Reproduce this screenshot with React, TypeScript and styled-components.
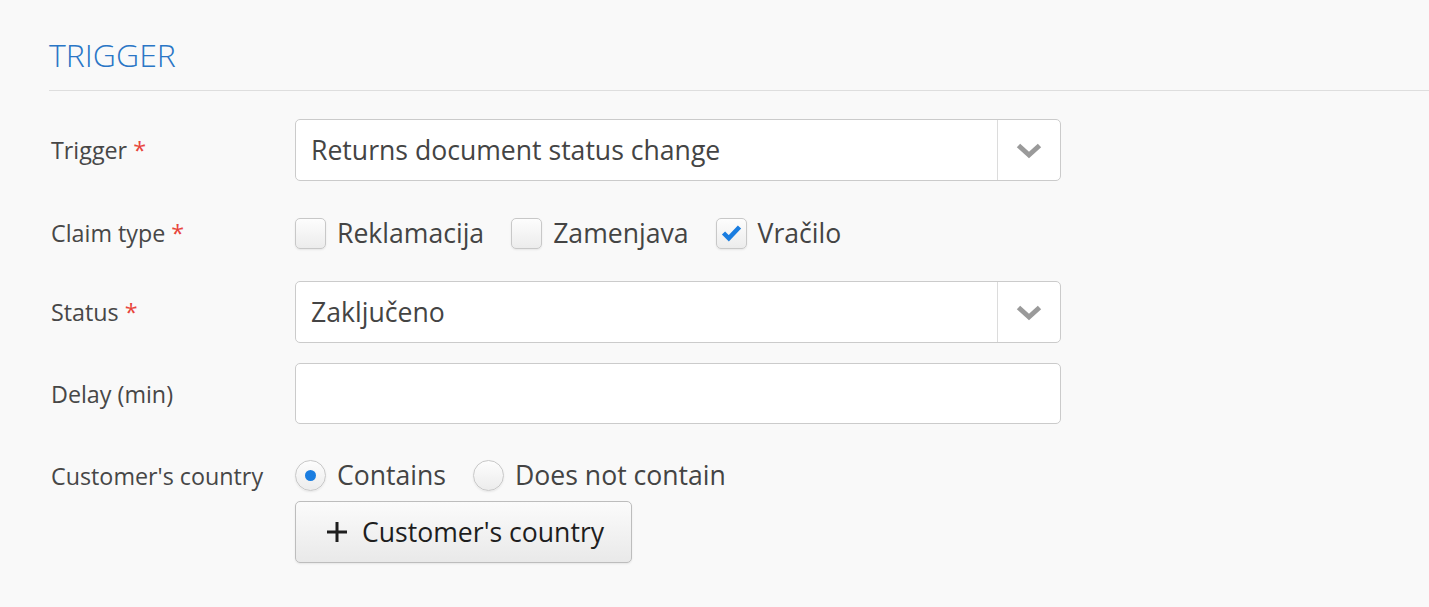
import styled, {createGlobalStyle} from "styled-components";

const GlobalStyle = createGlobalStyle`
    html, body {
        margin: 0;
        padding: 0;
        background: #f9f9f9;
        font-family: "Open Sans", "DejaVu Sans", sans-serif;
    }
    * {
        box-sizing: border-box;
    }
`

const ChevronIcon = () => (
    <svg width="28" height="17" viewBox="0 0 28 17">
        <polyline points="3.5,3.5 14,13 24.5,3.5" fill="none" stroke="#9a9a9a" strokeWidth="5"
                  strokeLinejoin="miter" strokeLinecap="butt"/>
    </svg>
);

const CheckIcon = () => (
    <svg width="21" height="18" viewBox="0 0 21 18">
        <polyline points="2.5,9 7.8,14.3 18.5,3" fill="none" stroke="#1a7de0" strokeWidth="4.5"
                  strokeLinejoin="miter" strokeLinecap="butt"/>
    </svg>
);

const PlusIcon = () => (
    <svg width="22" height="22" viewBox="0 0 22 22">
        <path d="M11 1v20M1 11h20" stroke="#1e1e1e" strokeWidth="3"/>
    </svg>
);

type SelectProps = { value: string };

const Select = ({value}: SelectProps) => (
    <SelectBox>
        <SelectValue>{value}</SelectValue>
        <SelectArrow>
            <ChevronIcon/>
        </SelectArrow>
    </SelectBox>
);

type CheckProps = { label: string; checked?: boolean };

const Check = ({label, checked}: CheckProps) => (
    <Option>
        <CheckBox>{checked && <CheckIcon/>}</CheckBox>
        <OptionText>{label}</OptionText>
    </Option>
);

type RadioProps = { label: string; selected?: boolean };

const Radio = ({label, selected}: RadioProps) => (
    <Option>
        <RadioCircle>{selected && <RadioDot/>}</RadioCircle>
        <OptionText>{label}</OptionText>
    </Option>
);

const App = () => {
    return (
        <Page>
            <GlobalStyle/>
            <Title>TRIGGER</Title>
            <Form>
                <Row $mb={21}>
                    <Label>Trigger<Required>*</Required></Label>
                    <Select value="Returns document status change"/>
                </Row>
                <Row $mb={17}>
                    <Label>Claim type<Required>*</Required></Label>
                    <OptionGroup>
                        <Check label="Reklamacija"/>
                        <Check label="Zamenjava"/>
                        <Check label="Vračilo" checked/>
                    </OptionGroup>
                </Row>
                <Row $mb={20}>
                    <Label>Status<Required>*</Required></Label>
                    <Select value="Zaključeno"/>
                </Row>
                <Row $mb={20}>
                    <Label>Delay (min)</Label>
                    <TextInput/>
                </Row>
                <Row $mb={40}>
                    <Label>Customer's country</Label>
                    <Stack>
                        <RadioGroup>
                            <Radio label="Contains" selected/>
                            <Radio label="Does not contain"/>
                        </RadioGroup>
                        <AddButton>
                            <PlusIcon/>
                            <span>Customer's country</span>
                        </AddButton>
                    </Stack>
                </Row>
            </Form>
        </Page>
    );
};

export default App;

const Page = styled.div`
    min-height: 100vh;
    padding-left: 49px;
    background: #f9f9f9;
`
const Title = styled.h2`
    margin: 0;
    padding: 36px 0 16px 0;
    font-size: 32px;
    line-height: 38px;
    font-weight: 300;
    color: #2a76c6;
    border-bottom: 1px solid #dedede;
`
const Form = styled.div`
    padding-top: 28px;
    width: 1012px;
`
const Row = styled.div<{ $mb: number }>`
    display: grid;
    grid-template-columns: 246px 766px;
    align-items: start;
    margin-bottom: ${p => p.$mb}px;
`
const Label = styled.div`
    height: 62px;
    display: flex;
    align-items: center;
    padding-left: 2px;
    font-size: 23.3px;
    color: #474747;
`
const Required = styled.span`
    color: #e8453c;
    margin-left: 6px;
`
const SelectBox = styled.div`
    height: 62px;
    display: flex;
    align-items: stretch;
    background: #fff;
    border: 1px solid #cbcbcb;
    border-radius: 5px;
`
const SelectValue = styled.div`
    flex: 1;
    display: flex;
    align-items: center;
    padding-left: 15px;
    font-size: 26.6px;
    color: #444;
`
const SelectArrow = styled.div`
    width: 63px;
    display: flex;
    align-items: center;
    justify-content: center;
    border-left: 1px solid #dcdcdc;
`
const TextInput = styled.input`
    height: 61px;
    width: 100%;
    background: #fff;
    border: 1px solid #cbcbcb;
    border-radius: 5px;
    font: inherit;
    font-size: 26.6px;
    padding: 0 15px;
    outline: none;
`
const OptionGroup = styled.div`
    height: 62px;
    display: flex;
    align-items: center;
    gap: 27px;
`
const Option = styled.label`
    height: 31px;
    display: flex;
    align-items: center;
    gap: 11px;
`
const OptionText = styled.span`
    font-size: 26.6px;
    line-height: 31px;
    color: #444;
`
const CheckBox = styled.span`
    width: 31px;
    height: 31px;
    display: flex;
    align-items: center;
    justify-content: center;
    border: 1px solid #c8c8c8;
    border-radius: 5px;
    background: linear-gradient(#fdfdfd, #ececec);
    box-shadow: 0 1px 2px rgba(0, 0, 0, 0.08);
`
const RadioCircle = styled.span`
    width: 31px;
    height: 31px;
    display: flex;
    align-items: center;
    justify-content: center;
    border: 1px solid #c8c8c8;
    border-radius: 50%;
    background: linear-gradient(#fdfdfd, #ececec);
    box-shadow: 0 1px 2px rgba(0, 0, 0, 0.08);
`
const RadioDot = styled.span`
    width: 11px;
    height: 11px;
    border-radius: 50%;
    background: #1a7de0;
`
const Stack = styled.div`
    display: flex;
    flex-direction: column;
    align-items: flex-start;
    padding-top: 15px;
`
const RadioGroup = styled.div`
    display: flex;
    align-items: center;
    gap: 27px;
`
const AddButton = styled.button`
    margin-top: 10px;
    height: 62px;
    display: flex;
    align-items: center;
    gap: 14px;
    padding: 0 27px 0 30px;
    font-family: inherit;
    font-size: 26.6px;
    color: #1e1e1e;
    border: 1px solid #bdbdbd;
    border-radius: 5px;
    background: linear-gradient(#fbfbfb, #e9e9e9);
    box-shadow: 0 1px 2px rgba(0, 0, 0, 0.08);
`
